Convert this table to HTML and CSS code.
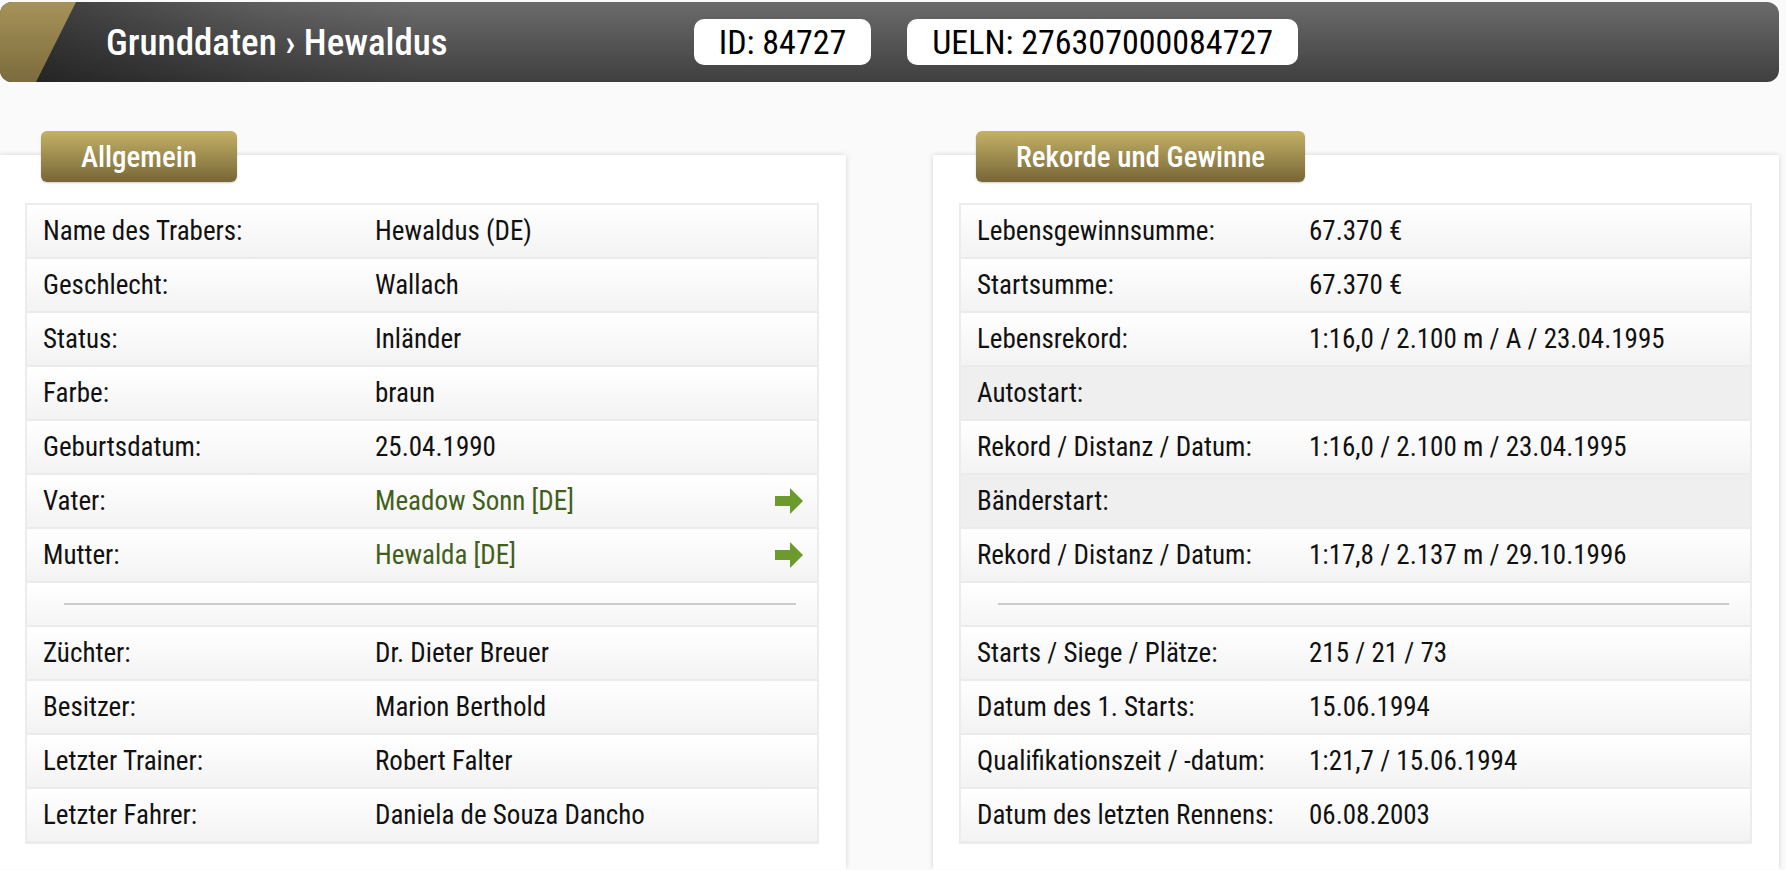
FILE: index.html
```html
<!DOCTYPE html>
<html lang="de">
<head>
<meta charset="utf-8">
<title>Grunddaten › Hewaldus</title>
<link rel="stylesheet" href="styles.css">
</head>
<body>
<header class="topbar">
  <h1 class="title">Grunddaten › Hewaldus</h1>
  <div class="pills">
    <span class="pill">ID: 84727</span>
    <span class="pill">UELN: 276307000084727</span>
  </div>
</header>

<main class="panels">
  <section class="panel">
    <div class="tab">Allgemein</div>
    <div class="table">
      <div class="row"><span class="lbl">Name des Trabers:</span><span class="val">Hewaldus (DE)</span></div>
      <div class="row"><span class="lbl">Geschlecht:</span><span class="val">Wallach</span></div>
      <div class="row"><span class="lbl">Status:</span><span class="val">Inländer</span></div>
      <div class="row"><span class="lbl">Farbe:</span><span class="val">braun</span></div>
      <div class="row"><span class="lbl">Geburtsdatum:</span><span class="val">25.04.1990</span></div>
      <div class="row"><span class="lbl">Vater:</span><a class="val link" href="#">Meadow Sonn [DE]</a><svg class="arrow" viewBox="0 0 28 28" width="28" height="28"><polygon points="0,9 15,9 15,1 28,14 15,27 15,19 0,19"/></svg></div>
      <div class="row"><span class="lbl">Mutter:</span><a class="val link" href="#">Hewalda [DE]</a><svg class="arrow" viewBox="0 0 28 28" width="28" height="28"><polygon points="0,9 15,9 15,1 28,14 15,27 15,19 0,19"/></svg></div>
      <div class="row sep"><hr></div>
      <div class="row"><span class="lbl">Züchter:</span><span class="val">Dr. Dieter Breuer</span></div>
      <div class="row"><span class="lbl">Besitzer:</span><span class="val">Marion Berthold</span></div>
      <div class="row"><span class="lbl">Letzter Trainer:</span><span class="val">Robert Falter</span></div>
      <div class="row"><span class="lbl">Letzter Fahrer:</span><span class="val">Daniela de Souza Dancho</span></div>
    </div>
  </section>

  <section class="panel">
    <div class="tab">Rekorde und Gewinne</div>
    <div class="table">
      <div class="row"><span class="lbl">Lebensgewinnsumme:</span><span class="val">67.370 €</span></div>
      <div class="row"><span class="lbl">Startsumme:</span><span class="val">67.370 €</span></div>
      <div class="row"><span class="lbl">Lebensrekord:</span><span class="val">1:16,0 / 2.100 m / A / 23.04.1995</span></div>
      <div class="row group"><span class="lbl">Autostart:</span></div>
      <div class="row"><span class="lbl">Rekord / Distanz / Datum:</span><span class="val">1:16,0 / 2.100 m / 23.04.1995</span></div>
      <div class="row group"><span class="lbl">Bänderstart:</span></div>
      <div class="row"><span class="lbl">Rekord / Distanz / Datum:</span><span class="val">1:17,8 / 2.137 m / 29.10.1996</span></div>
      <div class="row sep"><hr></div>
      <div class="row"><span class="lbl">Starts / Siege / Plätze:</span><span class="val">215 / 21 / 73</span></div>
      <div class="row"><span class="lbl">Datum des 1. Starts:</span><span class="val">15.06.1994</span></div>
      <div class="row"><span class="lbl">Qualifikationszeit / -datum:</span><span class="val">1:21,7 / 15.06.1994</span></div>
      <div class="row"><span class="lbl">Datum des letzten Rennens:</span><span class="val">06.08.2003</span></div>
    </div>
  </section>
</main>
</body>
</html>
```
FILE: styles.css
```css
* { box-sizing: border-box; }

html, body {
  margin: 0;
  padding: 0;
  background: #fafafa;
  font-family: "Roboto Condensed", Roboto, "Liberation Sans", sans-serif;
  color: #111;
}

body {
  width: 1786px;
  padding-top: 2px;
}

/* ---------- header ---------- */
.topbar {
  position: relative;
  width: 1779px;
  height: 80px;
  border-radius: 12px;
  overflow: hidden;
  display: flex;
  align-items: center;
  padding-left: 106px;
  background:
    linear-gradient(to right, rgba(0,0,0,0.42) 40px, rgba(0,0,0,0.12) 260px, rgba(0,0,0,0) 420px),
    linear-gradient(#6b6b6b, #3f3f3f);
}

.topbar::before {
  content: "";
  position: absolute;
  left: 0;
  top: 0;
  width: 80px;
  height: 80px;
  background: linear-gradient(#a6935a, #7c6b3c);
  clip-path: polygon(0 0, 76px 0, 36px 80px, 0 80px);
}

.title {
  margin: 0;
  font-size: 37px;
  font-weight: 500;
  color: #fff;
  white-space: nowrap;
}

.pills {
  display: flex;
  gap: 36px;
  margin-left: 246px;
}

.pill {
  display: flex;
  align-items: center;
  height: 46px;
  padding: 0 25px;
  background: #fff;
  border-radius: 10px;
  color: #000;
  font-size: 34px;
  font-weight: 400;
  white-space: nowrap;
}

/* ---------- panels ---------- */
.panels {
  display: flex;
  gap: 87px;
  margin-top: 73px;
}

.panel {
  width: 846px;
  background: #fff;
  box-shadow: 0 0 5px rgba(0,0,0,0.16);
  padding: 0 27px 25px 25px;
}

.panel + .panel {
  padding-left: 26px;
}

.tab {
  display: flex;
  align-items: center;
  width: fit-content;
  height: 51px;
  margin-top: -24px;
  margin-left: 16px;
  padding: 0 40px;
  border-radius: 6px;
  background: linear-gradient(#c4b266, #776637);
  box-shadow: 0 1px 2px rgba(0,0,0,0.2);
  color: #fff;
  font-size: 29px;
  font-weight: 500;
  white-space: nowrap;
}

.panel + .panel .tab {
  margin-left: 17px;
}

.table {
  margin-top: 21px;
  border: 2px solid #ececec;
  border-bottom-width: 1px;
}

.row {
  display: flex;
  align-items: center;
  height: 54px;
  padding: 0 14px 0 16px;
  background: linear-gradient(#ffffff, #f3f3f3);
  border-bottom: 2px solid #ebebeb;
  font-size: 27px;
}

.lbl {
  flex: 0 0 332px;
  white-space: nowrap;
}

.val {
  flex: 1 1 auto;
  white-space: nowrap;
}

.link {
  color: #42601b;
  text-decoration: none;
}

.arrow {
  flex: 0 0 auto;
  fill: #6c9a2c;
}

.row.group {
  background: #efefef;
}

.row.sep {
  height: 44px;
  padding: 0 21px 0 37px;
  background: linear-gradient(#ffffff, #f5f5f5);
}

.row.sep hr {
  flex: 1;
  margin: 0;
  border: 0;
  height: 2px;
  background: #cbcbcb;
}
```
